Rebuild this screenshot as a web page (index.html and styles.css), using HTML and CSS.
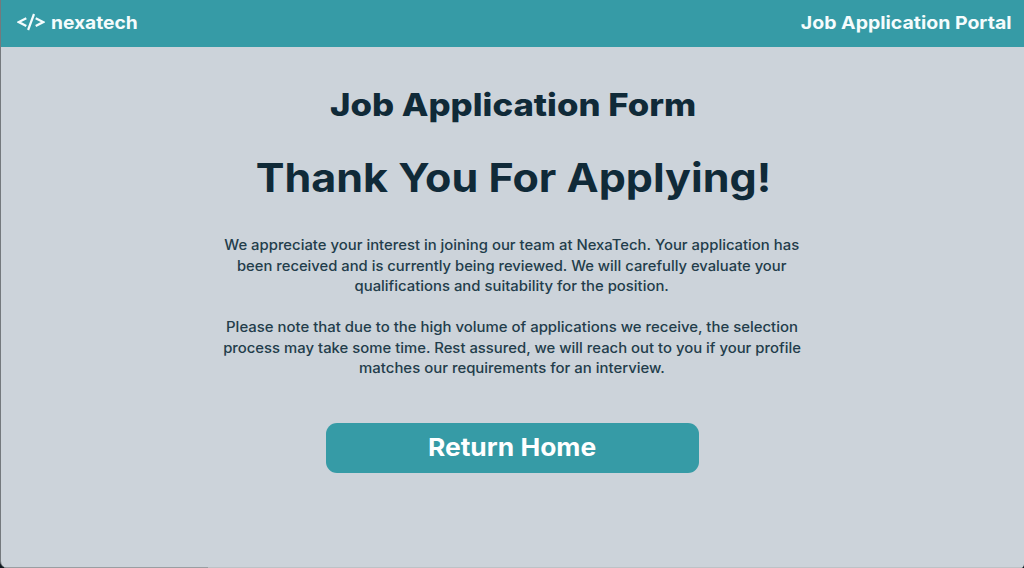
FILE: index.html
```html
<!DOCTYPE html>
<html lang="en">
<head>
<meta charset="utf-8">
<title>Job Application Portal</title>
<link rel="stylesheet" href="styles.css">
</head>
<body>
<div class="page">
  <header class="header">
    <div class="brand">
      <svg class="brand-icon" viewBox="0 0 28 18" fill="none" stroke="currentColor" stroke-width="2.2"><path d="M9.3 5.2 1.8 9.1l7.5 3.9M17 1 11.1 17M18.7 5.2l7.5 3.9-7.5 3.9"/></svg>
      <span class="brand-name">nexatech</span>
    </div>
    <span class="portal">Job Application Portal</span>
  </header>
  <main class="main">
    <h1 class="title">Job Application Form</h1>
    <h2 class="thanks">Thank You For Applying!</h2>
    <p class="copy">
      <span class="line">We appreciate your interest in joining our team at NexaTech. Your application has</span>
      <span class="line snug">been received and is currently being reviewed. We will carefully evaluate your</span>
      <span class="line">qualifications and suitability for the position.</span>
    </p>
    <p class="copy">
      <span class="line wide">Please note that due to the high volume of applications we receive, the selection</span>
      <span class="line">process may take some time. Rest assured, we will reach out to you if your profile</span>
      <span class="line wide">matches our requirements for an interview.</span>
    </p>
    <button class="home" type="button"><span class="home-label">Return Home</span></button>
  </main>
</div>
</body>
</html>
```
FILE: styles.css
```css
* { box-sizing: border-box; }
body { margin: 0; background: #101a20; font-family: Inter, "Open Sans", sans-serif; color: #102a38; }
.page { height: 568px; background: linear-gradient(90deg, #999ea2 207px, #bdc2c6 207px) bottom / 100% 1px no-repeat #ccd3da; border-left: 1px solid #74797d; border-radius: 0 0 4px 7px; overflow: hidden; }
.header { height: 46.5px; background: #369ba6; color: #f5fcfd; display: flex; align-items: center; justify-content: space-between; padding: 0 13px 2px 15.5px; font-weight: 700; font-size: 18px; }
.brand { display: flex; align-items: center; gap: 6px; }
.brand-icon { width: 28px; height: 18px; }
.brand-name { transform: scaleX(1.066); transform-origin: left; }
.portal { transform: scaleX(1.083); transform-origin: right; }
.main { display: flex; flex-direction: column; align-items: center; }
.title { margin: 38px 0 0; font-size: 31.5px; line-height: 40px; font-weight: 800; transform: scaleX(1.103); }
.thanks { margin: 28px 0 32px 2px; font-size: 39.5px; line-height: 50px; font-weight: 700; transform: scaleX(1.09); }
.copy { margin: 0 1px 20.5px 0; padding-top: 0.5px; font-size: 14px; line-height: 20.5px; font-weight: 500; color: #233d4b; text-align: center; }
.copy + .copy { padding-top: 0; }
.line { display: block; white-space: nowrap; transform: scaleX(1.062); }
.snug { transform: scaleX(1.056); }
.wide { transform: scaleX(1.066); }
.home { margin: 24px 1px 0 0; width: 373px; height: 50px; padding: 0 0 2px; border: 0; border-radius: 11px; background: #369ba6; color: #fff; font: 700 24.5px Inter, "Open Sans", sans-serif; }
.home-label { display: inline-block; transform: scaleX(1.078); }
```
